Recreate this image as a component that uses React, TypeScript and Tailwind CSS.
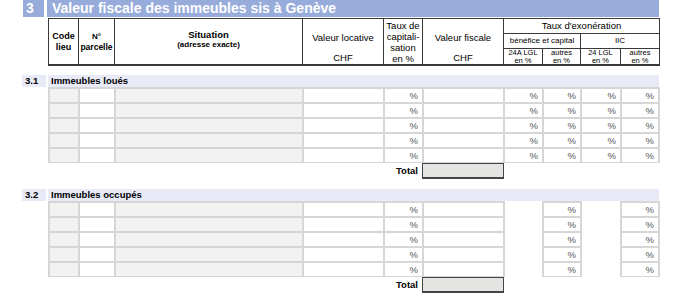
import React from "react";

const COLS = [30, 36, 188, 81, 39, 81, 39, 38, 40, 40];
const PCT = [4, 6, 7, 8, 9];
const GRAY = [0, 2];

function DataGrid({ missing }: { missing: number[] }) {
  const rows = [0, 1, 2, 3, 4];
  return (
    <div className="ml-[48px] w-[612px] flex flex-col">
      {rows.map((r) => {
        const last = r === rows.length - 1;
        return (
          <div key={r} className={`flex ${last ? "h-[16px]" : "h-[15px]"}`}>
            {COLS.map((w, c) => {
              if (missing.includes(c)) {
                return (
                  <div
                    key={c}
                    style={{ width: w }}
                    className="h-full shrink-0 border-l-2 border-[#d6d6d6] bg-white"
                  />
                );
              }
              const cls = [
                "h-full shrink-0 border-l-2 border-t-2 border-[#d6d6d6]",
                last ? "border-b" : "",
                c === COLS.length - 1 ? "border-r-2" : "",
                GRAY.includes(c) ? "bg-[#f2f2f2]" : "bg-white",
                "flex items-center justify-end pr-[4px] text-[9.5px] leading-none text-[#555]",
              ].join(" ");
              return (
                <div key={c} style={{ width: w }} className={cls}>
                  {PCT.includes(c) ? "%" : ""}
                </div>
              );
            })}
          </div>
        );
      })}
    </div>
  );
}

function TotalRow() {
  return (
    <div className="ml-[48px] flex h-[16px] items-stretch">
      <div className="w-[374px] flex items-center justify-end pr-[4px] text-[9.5px] font-bold text-black">
        Total
      </div>
      <div className="w-[82px] h-[16px] border border-b-2 border-[#444] bg-[#e4e4e2]" />
    </div>
  );
}

function SubHeading({ num, label }: { num: string; label: string }) {
  return (
    <div className="flex h-[12px]">
      <div className="ml-[22px] w-[24px] bg-[#e8eaf7] pl-[3px] text-[9.5px] font-bold leading-[12px] text-black">
        {num}
      </div>
      <div className="ml-[2px] w-[611px] bg-[#e8eaf7] pl-[3px] text-[9.5px] font-bold leading-[12px] text-black">
        {label}
      </div>
    </div>
  );
}

export default function App() {
  const cell = "bg-white text-black";
  return (
    <div className="w-[682px] h-[293px] overflow-hidden bg-white font-['Liberation_Sans',Arial,sans-serif]">
      {/* Title */}
      <div className="flex h-[17px]">
        <div className="ml-[23px] w-[21px] bg-[#97acdb] pl-[3px] text-[14px] font-bold leading-[17px] text-white">
          3
        </div>
        <div className="ml-[3px] w-[612px] bg-[#97acdb] pl-[5px] text-[14px] font-bold leading-[17px] text-white">
          Valeur fiscale des immeubles sis à Genève
        </div>
      </div>

      {/* Header table */}
      <div className="mt-px ml-[48px] w-[612px] bg-[#3a3a3a] px-px pt-px pb-[2px]">
        <div className="grid h-[45px] grid-cols-[29px_35px_187px_80px_38px_80px_38px_37px_39px_38px] grid-rows-[14px_14px_15px] gap-px">
          <div className={`${cell} col-start-1 row-start-1 row-span-3 flex flex-col items-center justify-center text-[9px] font-bold leading-[11px]`}>
            <span>Code</span>
            <span>lieu</span>
          </div>
          <div className={`${cell} col-start-2 row-start-1 row-span-3 flex flex-col items-center justify-center font-bold`}>
            <span className="text-[8px] leading-[11px]">N°</span>
            <span className="text-[8.5px] leading-[11px]">parcelle</span>
          </div>
          <div className={`${cell} col-start-3 row-start-1 row-span-3 flex flex-col items-center justify-center font-bold pb-[4px]`}>
            <span className="text-[9.5px] leading-[10px]">Situation</span>
            <span className="text-[8px] leading-[10px]">(adresse exacte)</span>
          </div>
          <div className={`${cell} col-start-4 row-start-1 row-span-3 flex flex-col items-center justify-between pt-[13px] text-[9.5px] leading-[12px]`}>
            <span>Valeur locative</span>
            <span>CHF</span>
          </div>
          <div className={`${cell} col-start-5 row-start-1 row-span-3 flex flex-col items-center justify-center text-[9.5px] leading-[11px]`}>
            <span>Taux de</span>
            <span>capitali-</span>
            <span>sation</span>
            <span>en %</span>
          </div>
          <div className={`${cell} col-start-6 row-start-1 row-span-3 flex flex-col items-center justify-between pt-[13px] text-[9.5px] leading-[12px]`}>
            <span>Valeur fiscale</span>
            <span>CHF</span>
          </div>
          <div className={`${cell} col-start-7 col-span-4 row-start-1 flex items-center justify-center text-[9.5px] leading-none`}>
            Taux d'exonération
          </div>
          <div className={`${cell} col-start-7 col-span-2 row-start-2 flex items-center justify-center text-[8px] leading-none`}>
            bénéfice et capital
          </div>
          <div className={`${cell} col-start-9 col-span-2 row-start-2 flex items-center justify-center text-[8px] leading-none`}>
            IIC
          </div>
          <div className={`${cell} col-start-7 row-start-3 flex flex-col items-center justify-center text-[7.5px] leading-[7.5px]`}>
            <span>24A LGL</span>
            <span>en %</span>
          </div>
          <div className={`${cell} col-start-8 row-start-3 flex flex-col items-center justify-center text-[7.5px] leading-[7.5px]`}>
            <span>autres</span>
            <span>en %</span>
          </div>
          <div className={`${cell} col-start-9 row-start-3 flex flex-col items-center justify-center text-[7.5px] leading-[7.5px]`}>
            <span>24 LGL</span>
            <span>en %</span>
          </div>
          <div className={`${cell} col-start-10 row-start-3 flex flex-col items-center justify-center text-[7.5px] leading-[7.5px]`}>
            <span>autres</span>
            <span>en %</span>
          </div>
        </div>
      </div>

      {/* Section 3.1 */}
      <div className="mt-[9px]">
        <SubHeading num="3.1" label="Immeubles loués" />
        <DataGrid missing={[]} />
        <TotalRow />
      </div>

      {/* Section 3.2 */}
      <div className="mt-[10px]">
        <SubHeading num="3.2" label="Immeubles occupés" />
        <DataGrid missing={[6, 8]} />
        <TotalRow />
      </div>
    </div>
  );
}
